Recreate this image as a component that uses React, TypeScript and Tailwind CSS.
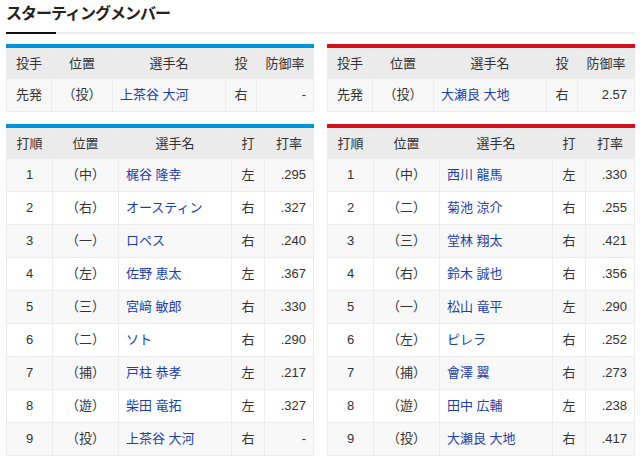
import React from "react";

type Pitcher = { pos: string; name: string; hand: string; era: string };
type Batter = { order: string; pos: string; name: string; hand: string; avg: string };

const leftPitcher: Pitcher = { pos: "（投）", name: "上茶谷 大河", hand: "右", era: "-" };
const rightPitcher: Pitcher = { pos: "（投）", name: "大瀬良 大地", hand: "右", era: "2.57" };

const leftBatters: Batter[] = [
  { order: "1", pos: "（中）", name: "梶谷 隆幸", hand: "左", avg: ".295" },
  { order: "2", pos: "（右）", name: "オースティン", hand: "右", avg: ".327" },
  { order: "3", pos: "（一）", name: "ロペス", hand: "右", avg: ".240" },
  { order: "4", pos: "（左）", name: "佐野 恵太", hand: "左", avg: ".367" },
  { order: "5", pos: "（三）", name: "宮﨑 敏郎", hand: "右", avg: ".330" },
  { order: "6", pos: "（二）", name: "ソト", hand: "右", avg: ".290" },
  { order: "7", pos: "（捕）", name: "戸柱 恭孝", hand: "左", avg: ".217" },
  { order: "8", pos: "（遊）", name: "柴田 竜拓", hand: "左", avg: ".327" },
  { order: "9", pos: "（投）", name: "上茶谷 大河", hand: "右", avg: "-" },
];

const rightBatters: Batter[] = [
  { order: "1", pos: "（中）", name: "西川 龍馬", hand: "左", avg: ".330" },
  { order: "2", pos: "（二）", name: "菊池 涼介", hand: "右", avg: ".255" },
  { order: "3", pos: "（三）", name: "堂林 翔太", hand: "右", avg: ".421" },
  { order: "4", pos: "（右）", name: "鈴木 誠也", hand: "右", avg: ".356" },
  { order: "5", pos: "（一）", name: "松山 竜平", hand: "左", avg: ".290" },
  { order: "6", pos: "（左）", name: "ピレラ", hand: "右", avg: ".252" },
  { order: "7", pos: "（捕）", name: "會澤 翼", hand: "右", avg: ".273" },
  { order: "8", pos: "（遊）", name: "田中 広輔", hand: "左", avg: ".238" },
  { order: "9", pos: "（投）", name: "大瀬良 大地", hand: "右", avg: ".417" },
];

const th = "h-[30px] border border-[#ececec] bg-[#ebebeb] font-normal text-center p-0";
const td = "h-[33px] border border-[#ececec] p-0";

function PitcherTable({ p, bar }: { p: Pitcher; bar: string }) {
  return (
    <div className="w-[308px]">
      <div className={`h-[4px] ${bar}`} />
      <table className="w-full table-fixed border-collapse border border-[#dedede]">
        <colgroup>
          <col className="w-[45px]" />
          <col className="w-[61px]" />
          <col className="w-[113px]" />
          <col className="w-[31px]" />
          <col />
        </colgroup>
        <thead>
          <tr>
            <th className={th}>投手</th>
            <th className={th}>位置</th>
            <th className={th}>選手名</th>
            <th className={th}>投</th>
            <th className={th}>防御率</th>
          </tr>
        </thead>
        <tbody>
          <tr className="bg-[#f8f8f8]">
            <td className={`${td} text-center`}>先発</td>
            <td className={`${td} text-center`}>{p.pos}</td>
            <td className={`${td} pl-[7px] text-[#1a3fae]`}>{p.name}</td>
            <td className={`${td} text-center`}>{p.hand}</td>
            <td className={`${td} pr-[7px] text-right`}>{p.era}</td>
          </tr>
        </tbody>
      </table>
    </div>
  );
}

function LineupTable({ rows, bar }: { rows: Batter[]; bar: string }) {
  return (
    <div className="w-[308px]">
      <div className={`h-[4px] ${bar}`} />
      <table className="w-full table-fixed border-collapse border border-[#dedede]">
        <colgroup>
          <col className="w-[46px]" />
          <col className="w-[66px]" />
          <col className="w-[113px]" />
          <col className="w-[33px]" />
          <col />
        </colgroup>
        <thead>
          <tr>
            <th className={th}>打順</th>
            <th className={th}>位置</th>
            <th className={th}>選手名</th>
            <th className={th}>打</th>
            <th className={th}>打率</th>
          </tr>
        </thead>
        <tbody>
          {rows.map((r, i) => (
            <tr key={r.order} className={i % 2 === 0 ? "bg-[#f8f8f8]" : "bg-white"}>
              <td className={`${td} text-center`}>{r.order}</td>
              <td className={`${td} text-center`}>{r.pos}</td>
              <td className={`${td} pl-[7px] text-[#1a3fae]`}>{r.name}</td>
              <td className={`${td} text-center`}>{r.hand}</td>
              <td className={`${td} pr-[7px] text-right`}>{r.avg}</td>
            </tr>
          ))}
        </tbody>
      </table>
    </div>
  );
}

export default function App() {
  return (
    <div
      className="w-[640px] h-[461px] bg-white pl-[6px] pr-[5px] text-[13px] text-[#333]"
      style={{ fontFamily: '"Liberation Sans", "Noto Sans CJK JP", sans-serif' }}
    >
      <div className="pt-[3px]">
        <h2 className="text-[16px] font-bold leading-[22px] tracking-[-1px] text-[#222]">スターティングメンバー</h2>
        <div className="mt-[7px] h-[2px] bg-[#eeeeee]">
          <div className="h-[2px] w-[50px] bg-[#111]" />
        </div>
      </div>
      <div className="mt-[10px] flex gap-[13px]">
        <PitcherTable p={leftPitcher} bar="bg-[#0095de]" />
        <PitcherTable p={rightPitcher} bar="bg-[#d7101e]" />
      </div>
      <div className="mt-[12px] flex gap-[13px]">
        <LineupTable rows={leftBatters} bar="bg-[#0095de]" />
        <LineupTable rows={rightBatters} bar="bg-[#d7101e]" />
      </div>
    </div>
  );
}
